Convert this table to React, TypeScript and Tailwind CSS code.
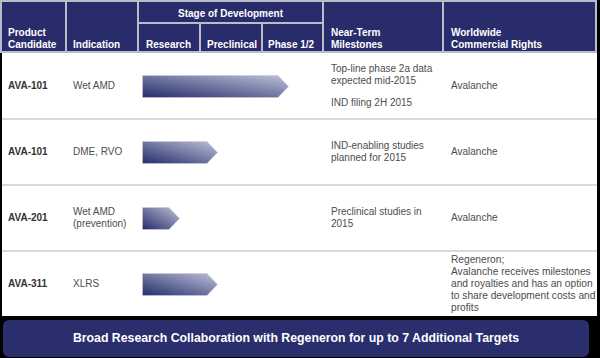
import React from "react";

const font = { fontFamily: '"Liberation Sans", Arial, sans-serif' };

function Arrow({ width }: { width: number }) {
  const h = 23;
  const tip = 11;
  const id = `g${width}`;
  return (
    <svg width={width} height={h} viewBox={`0 0 ${width} ${h}`} className="block">
      <defs>
        <linearGradient id={id} x1="0" y1="1" x2="1" y2="0">
          <stop offset="0" stopColor="#232d6b" />
          <stop offset="1" stopColor="#bfc1d8" />
        </linearGradient>
      </defs>
      <polygon
        points={`0.5,0.5 ${width - tip},0.5 ${width - 0.5},${h / 2} ${width - tip},${h - 0.5} 0.5,${h - 0.5}`}
        fill={`url(#${id})`}
        stroke="#c9cbdd"
        strokeWidth="0.6"
      />
    </svg>
  );
}

const rows = [
  {
    id: "AVA-101",
    ind: ["Wet AMD"],
    arrow: 147,
    ms: (
      <div>
        <div>Top-line phase 2a data</div>
        <div>expected mid-2015</div>
        <div className="mt-[9px]">IND filing 2H 2015</div>
      </div>
    ),
    rights: <div>Avalanche</div>,
  },
  {
    id: "AVA-101",
    ind: ["DME, RVO"],
    arrow: 76,
    ms: (
      <div>
        <div>IND-enabling studies</div>
        <div>planned for 2015</div>
      </div>
    ),
    rights: <div>Avalanche</div>,
  },
  {
    id: "AVA-201",
    ind: ["Wet AMD", "(prevention)"],
    arrow: 38,
    ms: (
      <div>
        <div>Preclinical studies in</div>
        <div>2015</div>
      </div>
    ),
    rights: <div>Avalanche</div>,
  },
  {
    id: "AVA-311",
    ind: ["XLRS"],
    arrow: 76,
    ms: <div></div>,
    rights: (
      <div className="leading-[12px] text-[10.2px]">
        <div>Regeneron;</div>
        <div className="whitespace-nowrap">Avalanche receives milestones</div>
        <div className="whitespace-nowrap">and royalties and has an option</div>
        <div className="whitespace-nowrap">to share development costs and</div>
        <div>profits</div>
      </div>
    ),
  },
];

export default function App() {
  return (
    <div className="w-[600px] h-[358px] bg-black overflow-hidden flex flex-col" style={font}>
      {/* Header */}
      <div className="w-[597px] h-[53px] grid grid-cols-[63px_70px_60px_60px_59px_118px_151px] grid-rows-[20px_27px] gap-[2px] p-[2px] bg-[#b9bccb] text-white font-bold text-[10px] leading-[12px]">
        <div className="row-span-2 bg-[#282c6a] flex flex-col justify-end px-[6px]">
          <div>Product</div>
          <div>Candidate</div>
        </div>
        <div className="row-span-2 bg-[#282c6a] flex flex-col justify-end px-[6px]">
          <div>Indication</div>
        </div>
        <div className="col-span-3 bg-[#282c6a] text-center pt-[6px]">Stage of Development</div>
        <div className="row-span-2 col-start-6 row-start-1 bg-[#282c6a] flex flex-col justify-end px-[7px]">
          <div>Near-Term</div>
          <div>Milestones</div>
        </div>
        <div className="row-span-2 col-start-7 row-start-1 bg-[#282c6a] flex flex-col justify-end px-[7px]">
          <div>Worldwide</div>
          <div>Commercial Rights</div>
        </div>
        <div className="col-start-3 row-start-2 bg-[#282c6a] flex items-end px-[7px]">Research</div>
        <div className="col-start-4 row-start-2 bg-[#282c6a] flex items-end px-[6px]">Preclinical</div>
        <div className="col-start-5 row-start-2 bg-[#282c6a] flex items-end px-[5px]">Phase 1/2</div>
      </div>

      {/* Body */}
      <div className="ml-[2px] w-[595px] h-[263px] bg-white pt-[1px] flex flex-col">
        {rows.map((r, i) => (
          <React.Fragment key={i}>
            {i > 0 && <div className="h-[2px] bg-[#d9d9d9]" />}
            <div className="grid grid-cols-[65px_72px_185px_120px_153px] items-center h-[64px] text-[10px] leading-[12.5px] text-[#4d4d4d]">
              <div className="pl-[6px] font-bold text-[10px] text-[#333333]">{r.id}</div>
              <div className="pl-[6px]">
                {r.ind.map((t) => (
                  <div key={t}>{t}</div>
                ))}
              </div>
              <div className="pl-[3px]">
                <Arrow width={r.arrow} />
              </div>
              <div className="pl-[7px] whitespace-nowrap">{r.ms}</div>
              <div className="pl-[7px]">{r.rights}</div>
            </div>
          </React.Fragment>
        ))}
      </div>

      {/* Banner */}
      <div className="mt-[4px] ml-[3px] w-[586px] h-[37px] rounded-[6px] bg-[#2a2e6c] flex items-center justify-center text-white font-bold text-[12.3px]">
        Broad Research Collaboration with Regeneron for up to 7 Additional Targets
      </div>
    </div>
  );
}
